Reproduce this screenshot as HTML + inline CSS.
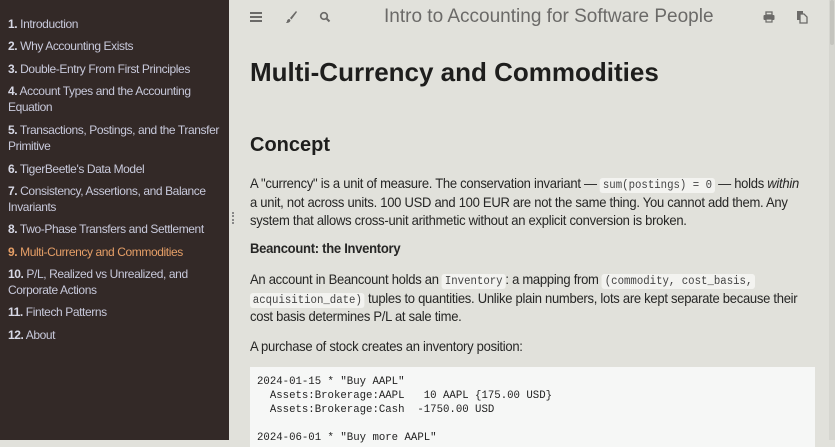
<!DOCTYPE html>
<html><head><meta charset="utf-8"><style>
*{margin:0;padding:0;box-sizing:border-box}
body{width:835px;height:440px;overflow:hidden;background:#e1e1db;font-family:"Liberation Sans",sans-serif;color:#262625;position:relative}
#side{position:absolute;left:0;top:0;width:229px;height:440px;background:#332927;color:#c8c9db;font-size:12px;letter-spacing:-0.4px}
#side div{position:absolute;left:8px;width:215px;line-height:16px;white-space:nowrap}
#side b{color:#d8d9e6}
#side .a{color:#e69f67}#side .a b{color:#e69f67}
#main{position:absolute;left:229px;top:0;right:0;height:440px}
.ic{position:absolute;top:9px}
#title{position:absolute;top:6px;left:155px;width:320px;text-align:center;font-size:19px;color:#6b6a68;white-space:nowrap}
h1{position:absolute;left:21px;top:57px;font-size:26px;font-weight:bold;color:#1e1e1d}
h2{position:absolute;left:21px;top:134px;font-size:20px;font-weight:bold;color:#1e1e1d}
.p{position:absolute;left:21px;width:598px;font-size:14px;letter-spacing:-0.3px;line-height:18.5px;transform:scaleX(0.93);transform-origin:0 0}
code{font-family:"Liberation Mono",monospace;font-size:11.5px;line-height:1;letter-spacing:0;background:#f3f3f0;padding:1px 3px;border-radius:3px;color:#444}
pre{position:absolute;left:21px;top:367px;width:565px;height:80px;background:#f6f7f6;font-family:"Liberation Mono",monospace;font-size:10.7px;line-height:14px;padding:8px 7px;color:#222}
#sb{position:absolute;right:0;top:0;width:6px;height:440px;background:#d6d6d0}
#sb i{position:absolute;left:1px;top:0;width:4px;height:45px;background:#c4c4be;border-radius:2px}
</style></head><body>
<div id="side">
<div style="top:16px"><b>1.</b> Introduction</div>
<div style="top:38px"><b>2.</b> Why Accounting Exists</div>
<div style="top:61px"><b>3.</b> Double-Entry From First Principles</div>
<div style="top:83px"><b>4.</b> Account Types and the Accounting<br>Equation</div>
<div style="top:122px"><b>5.</b> Transactions, Postings, and the Transfer<br>Primitive</div>
<div style="top:161px"><b>6.</b> TigerBeetle's Data Model</div>
<div style="top:183px"><b>7.</b> Consistency, Assertions, and Balance<br>Invariants</div>
<div style="top:221px"><b>8.</b> Two-Phase Transfers and Settlement</div>
<div style="top:244px" class="a"><b>9.</b> Multi-Currency and Commodities</div>
<div style="top:266px"><b>10.</b> P/L, Realized vs Unrealized, and<br>Corporate Actions</div>
<div style="top:304px"><b>11.</b> Fintech Patterns</div>
<div style="top:327px"><b>12.</b> About</div>
</div>
<div style="position:absolute;left:232px;top:212px;width:2px;height:12px;border-left:2px dotted #888"></div>
<div id="main">
<svg class="ic" style="left:21px" width="12" height="16" viewBox="0 0 12 16"><rect x="0" y="3" width="12" height="2" fill="#6b6a68"/><rect x="0" y="7" width="12" height="2" fill="#6b6a68"/><rect x="0" y="11" width="12" height="2" fill="#6b6a68"/></svg>
<svg class="ic" style="left:56px" width="12" height="16" viewBox="0 0 12 16"><path d="M11 2L5 9l1.5 1.5L12 3z M4.5 10C3 10 2 11 2 12.5L1 14c2 0 4-.5 4.5-2.5z" fill="#6b6a68"/></svg>
<svg class="ic" style="left:90px" width="12" height="16" viewBox="0 0 12 16"><circle cx="5" cy="7" r="3.3" fill="none" stroke="#6b6a68" stroke-width="1.7"/><path d="M7.5 9.5L10.5 12.5" stroke="#6b6a68" stroke-width="2"/></svg>
<div id="title">Intro to Accounting for Software People</div>
<svg class="ic" style="left:534px" width="12" height="16" viewBox="0 0 12 16"><rect x="3" y="3" width="6" height="3" fill="none" stroke="#6b6a68" stroke-width="1.3"/><rect x="0.5" y="6" width="11" height="5" rx="1" fill="#6b6a68"/><rect x="3" y="10" width="6" height="3" fill="#e1e1db" stroke="#6b6a68" stroke-width="1.2"/></svg>
<svg class="ic" style="left:567px" width="12" height="16" viewBox="0 0 12 16"><rect x="1" y="2" width="6" height="9" fill="#6b6a68"/><path d="M4 5h4l3 3v6H4z" fill="#e1e1db" stroke="#6b6a68" stroke-width="1.3"/></svg>
<h1>Multi-Currency and Commodities</h1>
<h2>Concept</h2>
<div class="p" style="top:174px">A "currency" is a unit of measure. The conservation invariant — <code>sum(postings) = 0</code> — holds <i>within</i> a unit, not across units. 100 USD and 100 EUR are not the same thing. You cannot add them. Any system that allows cross-unit arithmetic without an explicit conversion is broken.</div>
<div class="p" style="top:239px;font-weight:bold">Beancount: the Inventory</div>
<div class="p" style="top:270px">An account in Beancount holds an <code>Inventory</code>: a mapping from <code>(commodity, cost_basis,</code> <code>acquisition_date)</code> tuples to quantities. Unlike plain numbers, lots are kept separate because their cost basis determines P/L at sale time.</div>
<div class="p" style="top:337px">A purchase of stock creates an inventory position:</div>
<pre>2024-01-15 * "Buy AAPL"
  Assets:Brokerage:AAPL   10 AAPL {175.00 USD}
  Assets:Brokerage:Cash  -1750.00 USD

2024-06-01 * "Buy more AAPL"</pre>
<div id="sb"><i></i></div>
</div>
</body></html>
